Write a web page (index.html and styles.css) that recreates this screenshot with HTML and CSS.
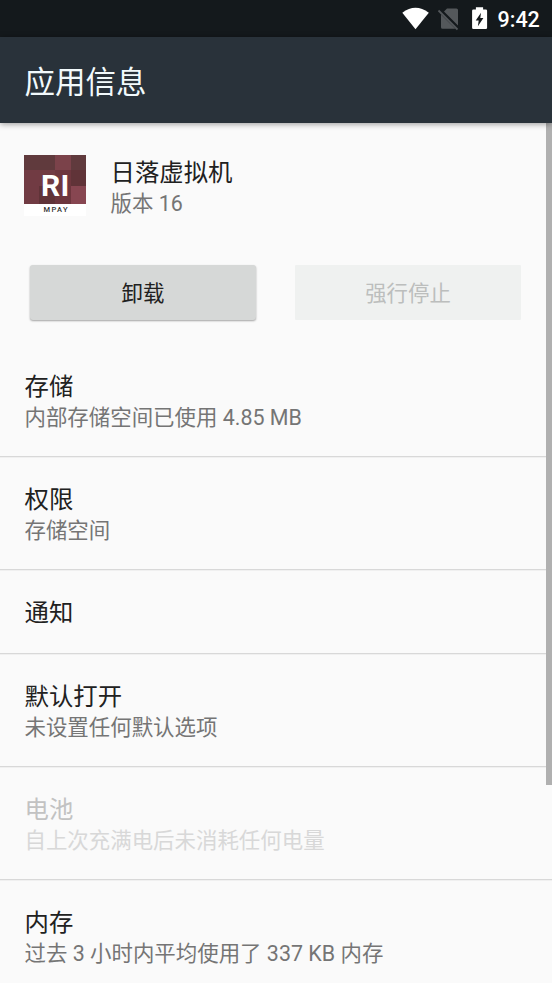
FILE: index.html
```html
<!DOCTYPE html>
<html lang="zh-CN">
<head>
<meta charset="utf-8">
<title>应用信息</title>
<link rel="stylesheet" href="styles.css">
</head>
<body>
<div class="screen">
  <div class="status">
    <svg class="status-icons" viewBox="0 0 90 37" width="90" height="37">
      <path fill="#fff" d="M2.300 12.700Q15.500 2.800 28.800 12.700L15.500 29.200Z"/>
      <g transform="translate(-1 0)">
        <path fill="#54585b" d="M48 8.500H57.500Q59 8.500 59 10V25.500L45 11.500Z M42 14.500L56.300 28.800H43.500Q42 28.800 42 27.300Z"/>
        <path stroke="#54585b" stroke-width="1.800" d="M39.500 10.500L58.500 29.500"/>
      </g>
      <g transform="translate(.7 0)">
        <path fill="#fff" d="M75.200 7.300h7.200v2.200h2.700q1.300 0 1.300 1.300v16.900q0 1.300-1.300 1.300h-12.400q-1.300 0-1.300-1.300v-16.900q0-1.300 1.300-1.300h2.500z"/>
        <path fill="#14191c" d="M80.300 12.800L75 20.500h3l-.8 5.700 5.500-8.200h-3.100z"/>
      </g>
    </svg>
    <span class="clock">9:42</span>
  </div>
  <header class="appbar">应用信息</header>
  <main class="content">
    <section class="app">
      <svg class="app-icon" viewBox="0 0 62 61" width="62" height="61">
        <path fill="#fff" d="M0 0h62v61H0z"/>
        <path fill="#603a3d" d="M0 0h62v49H0z"/>
        <path fill="#713b43" d="M0 15h31v34H0z"/>
        <path fill="#7b424a" d="M31 0h16v15H31z"/>
        <path fill="#603338" d="M15 31h16v18H15zM47 15h15v16H47z"/>
        <path fill="#6d363e" d="M31 15h16v34H31z"/>
        <path fill="#874651" d="M47 31h15v18H47z"/>
        <text class="logo-name" x="17" y="40.500">R</text>
        <text class="logo-name" x="36.500" y="40.500">I</text>
        <text class="logo-sub" x="19.500" y="57" textLength="24">MPAY</text>
      </svg>
      <div class="app-text">
        <div class="title">日落虚拟机</div>
        <div class="summary">版本 16</div>
      </div>
    </section>
    <div class="actions">
      <button class="btn">卸载</button>
      <button class="btn btn-off" disabled>强行停止</button>
    </div>
    <div class="row"><div class="title">存储</div><div class="summary">内部存储空间已使用 4.85 MB</div></div>
    <div class="row"><div class="title">权限</div><div class="summary">存储空间</div></div>
    <div class="row row-single"><div class="title">通知</div></div>
    <div class="row"><div class="title">默认打开</div><div class="summary">未设置任何默认选项</div></div>
    <div class="row row-off"><div class="title">电池</div><div class="summary">自上次充满电后未消耗任何电量</div></div>
    <div class="row"><div class="title">内存</div><div class="summary">过去 3 小时内平均使用了 337 KB 内存</div></div>
    <div class="scrollbar"></div>
  </main>
</div>
</body>
</html>
```
FILE: styles.css
```css
* { box-sizing: border-box; }
body { margin: 0; font-family: Roboto, "Noto Sans CJK SC", sans-serif; }
.screen {
  height: 983px;
  overflow: hidden;
  display: flex;
  flex-direction: column;
  background: #fafafa;
}
.status {
  flex: none;
  height: 37px;
  display: flex;
  align-items: center;
  justify-content: flex-end;
  padding-right: 12px;
  background: #14191c;
}
.status-icons { margin-right: 7.5px; }
.clock { width: 42.5px; font-size: 21.5px; font-weight: 500; line-height: 37px; color: #fff; white-space: nowrap; padding-top: 2px; }
.appbar {
  flex: none;
  position: relative;
  z-index: 1;
  height: 86px;
  padding-left: 24.5px;
  font-size: 30.5px;
  line-height: 91px;
  color: #f2fafc;
  background: #29323a;
  box-shadow: 0 1px 6px rgba(0, 0, 0, .4);
}
.content { position: relative; flex: none; }
.app { display: flex; gap: 24.5px; height: 142px; padding: 32px 0 0 24px; }
.app-text { padding-top: 2px; }
.app-icon { flex: none; }
.logo-name { font: 700 30px Roboto, sans-serif; fill: #fff; }
.logo-sub { font: 500 7.5px Roboto, sans-serif; fill: #333; }
.title { font-size: 24.4px; line-height: 31px; color: #212121; white-space: nowrap; }
.summary { font-size: 21.45px; line-height: 31px; color: #757575; white-space: nowrap; }
.actions { display: flex; gap: 39px; height: 79px; padding-left: 30px; }
.btn {
  width: 226px;
  height: 55px;
  padding: 0 0 2px;
  border: 0;
  border-radius: 3px;
  font-family: inherit;
  font-size: 21.4px;
  color: #212121;
  background: #d6d8d7;
  box-shadow: 0 1px 2px rgba(0, 0, 0, .35);
}
.btn-off { color: #bcbebd; background: #eff1f0; box-shadow: none; border-radius: 1px; }
.row {
  height: 113px;
  padding: 27px 0 0 24.5px;
  border-bottom: 1px solid #d8d8d8;
  box-shadow: 0 1px 0 #f0f0f0;
}
.row-single { height: 84px; }
.row-off .title { color: #c2c2c2; }
.row-off .summary { color: #d8d8d8; }
.scrollbar { position: absolute; top: 0; right: 0; width: 6px; height: 662px; background: #b0b0b0; }
```
